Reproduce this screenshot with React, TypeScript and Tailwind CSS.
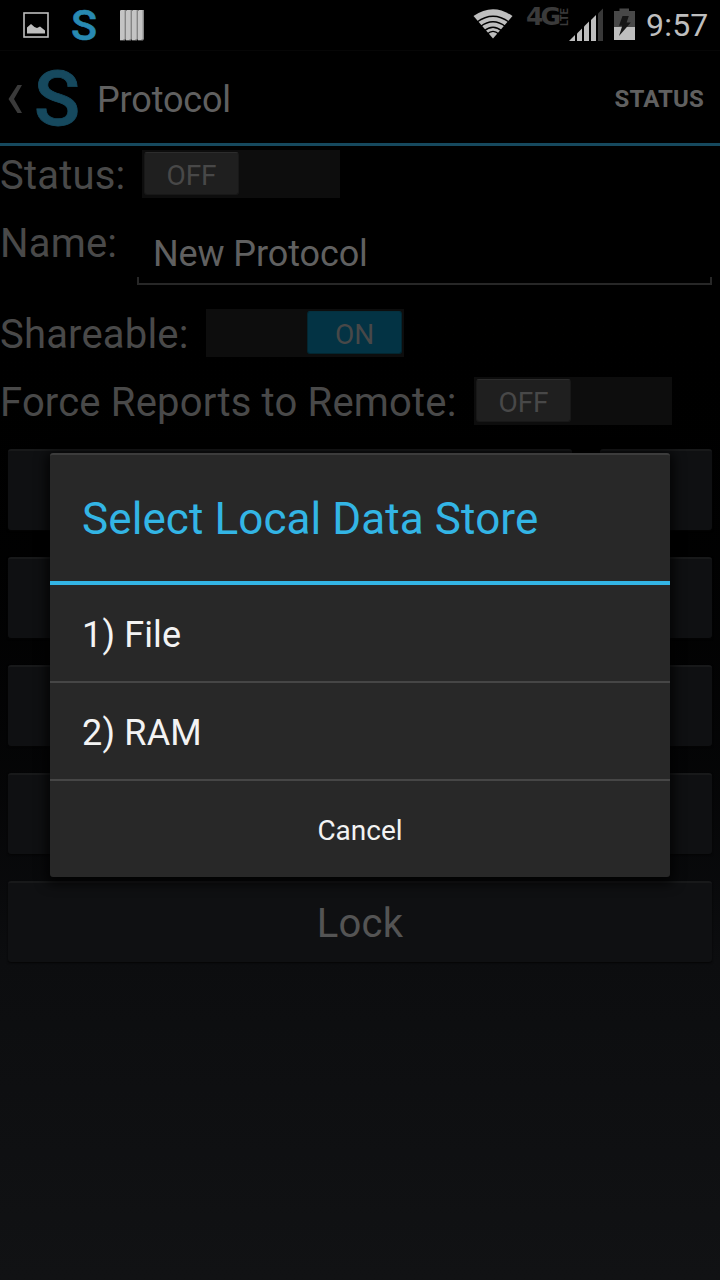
import React from "react";

function PictureIcon() {
  return (
    <svg width="26" height="26" viewBox="0 0 26 26" className="block">
      <rect x="1" y="1" width="24" height="24" fill="none" stroke="#bebebe" strokeWidth="1.6" />
      <path d="M4 21.5V15.5L8 12L11.5 15L14 16L17 14.5L22 18.5V21.5Z" fill="#bebebe" />
    </svg>
  );
}

function BarsIcon() {
  return (
    <svg width="24" height="31" viewBox="0 0 24 31" className="block">
      {[0, 6, 12, 18].map((x) => (
        <g key={x}>
          <path d={`M${x} 1L${x + 1} 0H${x + 6}V29L${x + 5} 30.5H${x}Z`} fill="#858585" />
          <path d={`M${x} 1L${x + 1} 0H${x + 4.6}V29H${x + 4}L${x + 3} 30H${x}Z`} fill="#c4c4c4" />
        </g>
      ))}
    </svg>
  );
}

function WifiIcon() {
  return (
    <svg width="40" height="30" viewBox="0 0 40 30" className="block">
      <path d="M0.5 7Q20 -6.5 39.5 7L20 29.5Z" fill="#bebebe" />
      <g fill="none" stroke="#000" strokeWidth="1.3">
        <path d="M4 13Q20 1.5 36 13" />
        <path d="M7.5 17.5Q20 8 32.5 17.5" />
        <path d="M11 22Q20 14.5 29 22" />
        <path d="M14 25.2Q20 19.5 26 25.2" />
      </g>
    </svg>
  );
}

function SignalIcon() {
  return (
    <svg width="35" height="33" viewBox="0 0 35 33" className="block">
      <g fill="#bebebe">
        <path d="M0 33L6 27V33Z" />
        <path d="M8 33V25.5L13 20.5V33Z" />
        <path d="M15 33V18.5L20 13.5V33Z" />
        <path d="M22 33V12L27 7V33Z" />
      </g>
      <path d="M29 33V5.5L34 0.5V33Z" fill="#383838" />
    </svg>
  );
}

function BatteryIcon() {
  return (
    <svg width="21" height="32" viewBox="0 0 21 32" className="block">
      <path d="M0 3H5.5V0.5H15V3H21V19H0Z" fill="#484848" />
      <path d="M0 19H21V32H0Z" fill="#bebebe" />
      <path d="M8.5 8H14.8L12.6 14.5H16.8L5 28L8.3 17.8H5Z" fill="#161616" />
    </svg>
  );
}

function StatusBar() {
  return (
    <div className="flex h-[51px] shrink-0 items-start border-b border-[#060606]">
      <div className="ml-[23px] mt-3">
        <PictureIcon />
      </div>
      <span className="ml-[21px] mt-px w-[28px] text-center text-[43px] font-medium leading-[48px] text-[#2889b2] [-webkit-text-stroke:0.6px_#2889b2]">
        S
      </span>
      <div className="ml-[22px] mt-[10px]">
        <BarsIcon />
      </div>
      <div className="ml-auto mt-[9px]">
        <WifiIcon />
      </div>
      <div className="ml-[13px] flex w-[44px] items-start pt-[6px] text-[#3a3a3a]">
        <span className="w-[34px] font-['DejaVu_Sans'] text-[25px] font-bold leading-[22px] tracking-[-3px]">4G</span>
        <span className="h-[20px] w-[10px] rotate-180 text-[11px] font-bold leading-[10px] [writing-mode:vertical-rl]">LTE</span>
      </div>
      <div className="-ml-px mt-2">
        <SignalIcon />
      </div>
      <div className="ml-[10px] mt-2">
        <BatteryIcon />
      </div>
      <span className="ml-[11px] mr-3 w-[62px] whitespace-nowrap text-[32px] leading-[51px] tracking-[0.2px] text-[#bebebe]">
        9:57
      </span>
    </div>
  );
}

function ActionBar() {
  return (
    <header className="flex h-[95px] shrink-0 items-center border-b-[3px] border-[#16495e]">
      <svg width="14" height="28" viewBox="0 0 14 28" className="ml-2 mt-[3px] block">
        <path d="M9.5 0H14L6 14L14 28H9.5L0.5 14Z" fill="#3a3a3a" />
      </svg>
      <span className="ml-[11px] w-[48px] pt-[3px] text-center text-[76px] font-medium leading-[88px] text-[#16495e] [-webkit-text-stroke:0.8px_#16495e]">
        S
      </span>
      <h1 className="ml-4 pt-[6px] text-[36px] leading-[42px] tracking-[-0.15px] text-[#606060]">Protocol</h1>
      <span className="ml-auto mr-4 pt-[3px] text-[24px] font-bold leading-7 tracking-[0.15px] text-[#606060]">STATUS</span>
    </header>
  );
}

function Toggle({ on }: { on: boolean }) {
  return (
    <div className={`flex h-12 w-[198px] bg-[#0d0d0d] px-[2px] pt-[2px] ${on ? "justify-end" : "justify-start"}`}>
      <div
        className={`h-[43px] w-[95px] rounded-[3px] border text-center text-[28px] leading-[45px] tracking-[-0.1px] text-[#484848] ${
          on ? "border-[#032630] border-t-[#04303e] bg-[#033344]" : "border-[#181818] border-t-[#2c2c2c] bg-[#1f1f1f]"
        }`}
      >
        {on ? "ON" : "OFF"}
      </div>
    </div>
  );
}

function FormButton({ className = "", children }: { className?: string; children?: React.ReactNode }) {
  return (
    <div
      className={`h-[81px] rounded-[3px] border-t-2 border-[#18191a] bg-[#0f1012] text-center text-[40px] leading-[82px] text-[#545454] shadow-[0_1px_2px_#050505] ${className}`}
    >
      {children}
    </div>
  );
}

function ProtocolForm() {
  return (
    <main className="flex flex-col text-[40px] leading-[48px] tracking-[0.18px] text-[#494949]">
      <div className="mt-1 flex h-12">
        <span className="w-[142px] pt-[2px]">Status:</span>
        <Toggle on={false} />
      </div>
      <div className="mt-[21px] flex h-[66px]">
        <span className="w-[137px] pt-px">Name:</span>
        <div className="flex h-full w-[575px] flex-col">
          <span className="pl-4 pt-[13px] text-[36px] leading-[45px] tracking-[-0.1px] text-[#606060]">New Protocol</span>
          <div className="h-2 border-x-2 border-b-2 border-[#272727]" />
        </div>
      </div>
      <div className="mt-[24px] flex h-12">
        <span className="w-[206px] pt-[2px]">Shareable:</span>
        <Toggle on />
      </div>
      <div className="mt-5 flex h-12">
        <span className="w-[474px] whitespace-nowrap pt-[2px]">Force Reports to Remote:</span>
        <Toggle on={false} />
      </div>
      <div className="mx-2 mt-6 flex flex-col gap-[27px]">
        <div className="flex gap-7">
          <FormButton className="w-[564px]" />
          <FormButton className="w-[112px]" />
        </div>
        <FormButton />
        <FormButton />
        <FormButton />
        <FormButton>Lock</FormButton>
      </div>
    </main>
  );
}

function DataStoreDialog() {
  return (
    <div
      role="dialog"
      className="absolute left-[50px] top-[453px] flex h-[424px] w-[620px] flex-col rounded-[3px] border-t-2 border-[#3c3c3c] bg-[#282828] shadow-[0_3px_12px_4px_rgba(0,0,0,0.75)]"
    >
      <h2 className="h-[130px] border-b-4 border-[#33b5e5] pl-8 text-[44px] leading-[129px] tracking-[0.09px] text-[#33b5e5]">
        Select Local Data Store
      </h2>
      <div className="h-[98px] border-b-2 border-[#464646] pl-8 text-[36px] leading-[101px] tracking-[0.15px] text-[#f3f3f3]">
        1) File
      </div>
      <div className="h-[98px] border-b-2 border-[#464646] pl-8 text-[36px] leading-[101px] tracking-[0.2px] text-[#f3f3f3]">
        2) RAM
      </div>
      <button type="button" className="h-24 pt-[2px] text-center text-[28px] leading-[96px] text-[#f3f3f3]">
        Cancel
      </button>
    </div>
  );
}

export default function App() {
  return (
    <div className="relative flex h-[1280px] w-[720px] flex-col overflow-hidden bg-linear-to-b from-black from-20% via-[#0c0d0f] via-75% to-[#111214] font-[Roboto,sans-serif]">
      <StatusBar />
      <ActionBar />
      <ProtocolForm />
      <DataStoreDialog />
    </div>
  );
}
